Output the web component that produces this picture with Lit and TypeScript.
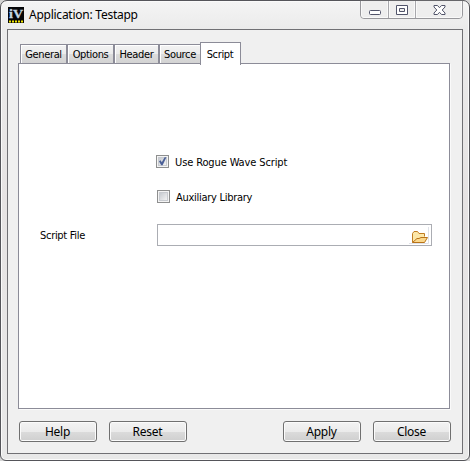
import { LitElement, html, css } from "lit";
import { customElement, state } from "lit/decorators.js";

@customElement("app-root")
export class AppRoot extends LitElement {
  @state() private active = "Script";

  static styles = css`
    :host { display: block; width: 470px; height: 461px; background: #d4d4d4; overflow: hidden; color: #000; }
    * { box-sizing: border-box; }
    .window {
      width: 470px; height: 461px; border: 1px solid #55555a; border-radius: 7px 7px 6px 6px;
      background: linear-gradient(#f4f4f4, #ebebeb 28px, #e6e3e3 200px, #e8e8e8);
      box-shadow: inset 0 0 0 1px #fafafa; padding: 0 6px 6px; display: flex; flex-direction: column;
    }
    .title { height: 28px; display: flex; align-items: flex-start; }
    .logo { width: 16px; height: 16px; margin: 6px 0 0 1px; flex: none; }
    .name { font: 12px/16px "Noto Sans", sans-serif; letter-spacing: -0.25px; margin: 6px 0 0 5px; flex: 1; white-space: nowrap; }
    .controls { width: 103px; height: 19px; margin-top: -1px; flex: none; }
    .client { flex: 1; border: 1px solid #707074; background: #f0f0f0; padding: 12px 11px 0 10px; display: flex; flex-direction: column; }
    .tabs { display: flex; height: 22px; align-items: flex-end; padding-left: 2px; }
    .tab {
      height: 20px; border: 1px solid #8c8c98; border-bottom: 0; box-shadow: inset 1px 1px 0 #fff;
      background: linear-gradient(#f3f3f3, #ebebeb 50%, #dcdcdc 50%, #d2d2d2); text-align: center;
      font: 11px/18px "DejaVu Sans Condensed", "DejaVu Sans", sans-serif; font-stretch: condensed; letter-spacing: -0.35px; white-space: nowrap; padding: 0;
    }
    .t0 { width: 47px; } .t1 { width: 47px; } .t2 { width: 45px; }
    .t3 { width: 42px; } .t4 { width: 41px; margin-left: -1px; }
    .tab.on { background: #fff; margin-bottom: -1px; height: 23px; position: relative; line-height: 17px; padding-right: 1px; box-shadow: none; }
    .panel {
      width: 432px; height: 346px; margin-top: -1px; border: 1px solid #8c8c98; background: #fff; box-shadow: 1px 1px 0 #fafafa;
      font: 11px/14px "DejaVu Sans Condensed", "DejaVu Sans", sans-serif; font-stretch: condensed; letter-spacing: -0.3px; padding-top: 91px;
    }
    .row { display: flex; align-items: center; white-space: nowrap; }
    .row span { padding-top: 2px; }
    .check { height: 13px; padding-left: 137px; gap: 6px; }
    .check span { letter-spacing: -0.12px; }
    .aux { margin-top: 22px; padding-left: 138px; }
    .check.aux span { letter-spacing: -0.28px; }
    .box { width: 13px; height: 13px; flex: none; }
    .file { height: 22px; margin-top: 21px; padding-left: 21px; }
    .label { width: 117px; }
    .input { width: 275px; height: 22px; border: 1px solid #abadb3; display: flex; justify-content: flex-end; padding: 2px 2px 0 0; }
    .folder { width: 20px; height: 18px; }
    .actions { display: flex; margin: 12px -2px 0 1px; gap: 12px; }
    .btn {
      width: 78px; height: 21px; border: 1px solid #707070; border-radius: 3px; padding: 0 1px 0 0;
      background: linear-gradient(#f3f3f3, #ebebeb 50%, #dcdcdc 50%, #cfcfcf); box-shadow: inset 0 0 0 1px #fbfbfb;
      font: 12px/19px "Noto Sans", sans-serif; letter-spacing: -0.25px; text-align: center; color: #000;
    }
    .gap { margin-left: 84px; }
    .logo-text { font: bold 12px "Liberation Serif", serif; }
  `;

  private tab(name: string, i: number) {
    return html`<button class="tab t${i} ${this.active === name ? "on" : ""}" @click=${() => (this.active = name)}>${name}</button>`;
  }

  private box(checked: boolean) {
    return html`<svg class="box" viewBox="0 0 13 13" shape-rendering="crispEdges">
      <defs><linearGradient id="g" x1="0" y1="0" x2="1" y2="1"><stop offset="0" stop-color="#c4c8ce"/><stop offset="1" stop-color="#f6f6f6"/></linearGradient></defs>
      <rect x=".5" y=".5" width="12" height="12" fill="#f4f4f4" stroke="#8e8f8f"/>
      <rect x="2.5" y="2.5" width="8" height="8" fill="url(#g)" stroke="#c8cbd0"/>
      ${checked ? html`<svg width="13" height="13" viewBox="0 0 13 13"><path d="M3 6.2 4.6 5.2 5.8 7.2 8.6 2.3 10.4 2.3 6.6 10.3 5.2 10.3Z" fill="#4a5f97" shape-rendering="geometricPrecision"/></svg>` : ""}
    </svg>`;
  }

  render() {
    return html`<div class="window">
      <div class="title">
        <svg class="logo" viewBox="0 0 16 16">
          <rect width="16" height="16" fill="#050608"/>
          <text class="logo-text" x="1" y="11" textLength="14" lengthAdjust="spacingAndGlyphs" fill="#c4d6e4" stroke="#c4d6e4" stroke-width=".3">iV</text>
          <path d="M1 14.5H16" stroke="#f2e600" stroke-width="2" stroke-dasharray="2 1"/>
        </svg>
        <div class="name">Application: Testapp</div>
        <svg class="controls" viewBox="0 0 103 19">
          <path d="M.5 0V15Q.5 18.5 4 18.5H99Q102.5 18.5 102.5 15V0" fill="#eee" stroke="#98989c"/>
          <path d="M28.5 1V18M55.5 1V18" stroke="#a8a8ac"/>
          <path d="M1.5 1V15Q1.5 17.5 4 17.5H27.5V1M29.5 1V17.5H54.5V1M56.5 1V17.5H99Q101.5 17.5 101.5 15V1" fill="none" stroke="#f9f9f9"/>
          <path d="M0 .5H103" stroke="#66666a"/>
          <g fill="#fff" stroke="#51546a">
            <rect x="9.5" y="10.5" width="11" height="4" rx="1"/>
            <path fill-rule="evenodd" d="M36.5 5.5H47.5V14.5H36.5ZM39.5 8.5H44.5V11.5H39.5Z"/>
            <path d="M74 5.5H77.5L79.5 7.7 81.5 5.5H85V7L82.2 10 85 13V14.5H81.5L79.5 12.3 77.5 14.5H74V13L76.8 10 74 7Z"/>
          </g>
        </svg>
      </div>
      <div class="client">
        <div class="tabs">${["General", "Options", "Header", "Source", "Script"].map((n, i) => this.tab(n, i))}</div>
        <div class="panel">
          <div class="row check">${this.box(true)}<span>Use Rogue Wave Script</span></div>
          <div class="row check aux">${this.box(false)}<span>Auxiliary Library</span></div>
          <div class="row file"><span class="label">Script File</span>
            <div class="input"><svg class="folder" viewBox="0 0 20 18">
              <path d="M0 16.5H19.5V0" fill="none" stroke="#dfe2e9"/>
              <path d="M3.5 15.5V6.5L5 4.5H8.5L10 6.5H15.5V9.5" fill="#fce7a8" stroke="#c07d22"/>
              <path d="M3.5 15.5 8 11.5H10L12 10.5H18.5L15.5 15.5Z" fill="#fbd88c" stroke="#b87318"/>
            </svg></div>
          </div>
        </div>
        <div class="actions">
          <button class="btn">Help</button><button class="btn">Reset</button>
          <button class="btn gap">Apply</button><button class="btn">Close</button>
        </div>
      </div>
    </div>`;
  }
}
